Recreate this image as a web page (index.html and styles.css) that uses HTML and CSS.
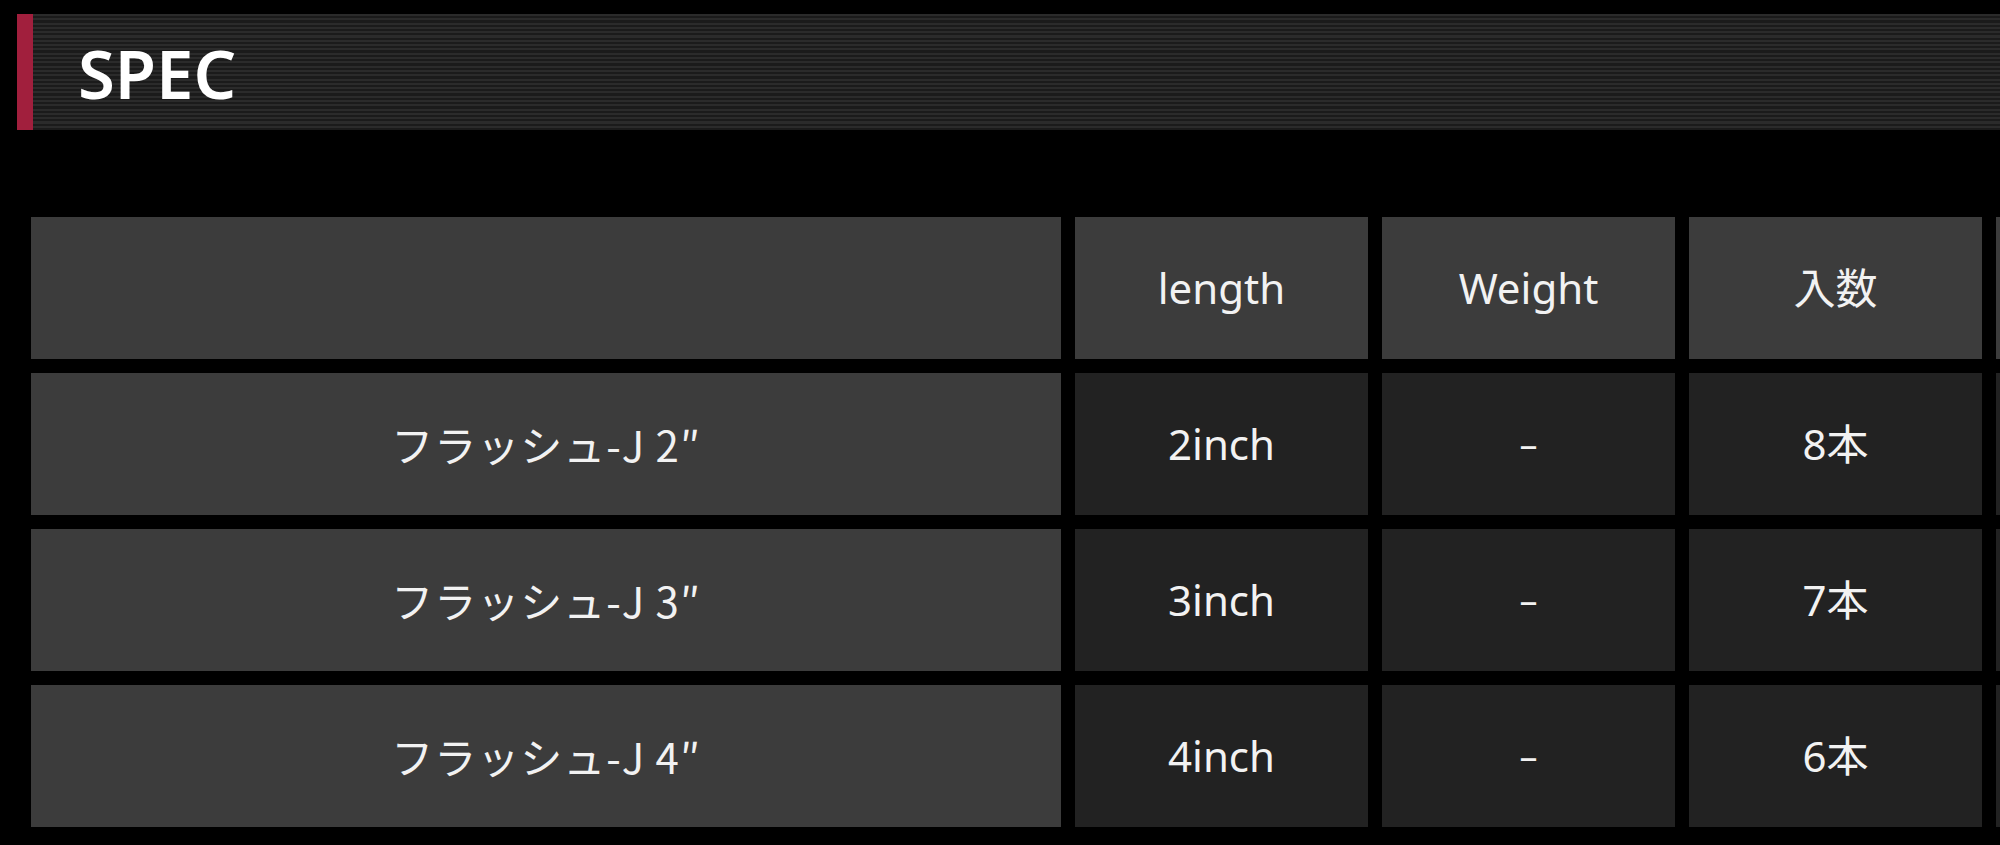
FILE: index.html
```html
<!DOCTYPE html>
<html lang="ja">
<head>
<meta charset="utf-8">
<title>SPEC</title>
<link rel="stylesheet" href="styles.css">
</head>
<body>
<div class="page">
  <h2 class="section-title"><span class="section-title__text">SPEC</span></h2>
  <div class="spec">
    <table class="spec-table">
      <colgroup>
        <col class="col-name">
        <col class="col-val">
        <col class="col-val">
        <col class="col-val">
        <col class="col-val">
      </colgroup>
      <thead>
        <tr>
          <th class="cell cell--head"></th>
          <th class="cell cell--head">length</th>
          <th class="cell cell--head">Weight</th>
          <th class="cell cell--head">入数</th>
          <th class="cell cell--head"></th>
        </tr>
      </thead>
      <tbody>
        <tr>
          <th class="cell cell--name">フラッシュ-J 2″</th>
          <td class="cell cell--val">2inch</td>
          <td class="cell cell--val cell--dash">–</td>
          <td class="cell cell--val">8本</td>
          <td class="cell cell--val"></td>
        </tr>
        <tr>
          <th class="cell cell--name">フラッシュ-J 3″</th>
          <td class="cell cell--val">3inch</td>
          <td class="cell cell--val cell--dash">–</td>
          <td class="cell cell--val">7本</td>
          <td class="cell cell--val"></td>
        </tr>
        <tr>
          <th class="cell cell--name">フラッシュ-J 4″</th>
          <td class="cell cell--val">4inch</td>
          <td class="cell cell--val cell--dash">–</td>
          <td class="cell cell--val">6本</td>
          <td class="cell cell--val"></td>
        </tr>
      </tbody>
    </table>
  </div>
</div>
</body>
</html>
```

FILE: styles.css
```css
html, body {
  margin: 0;
  padding: 0;
  background: #000;
  overflow: hidden;
}

body {
  font-family: "Noto Sans", "Noto Sans CJK JP", sans-serif;
  color: #f2f2f2;
}

.page {
  padding: 14px 0 0 17px;
  width: 2400px;
}

.section-title {
  margin: 0;
  height: 116px;
  display: flex;
  align-items: center;
  box-sizing: border-box;
  border-left: 16px solid #a11f3d;
  padding-left: 45px;
  background: repeating-linear-gradient(
    to bottom,
    #2b2b2b 0px,
    #2b2b2b 2px,
    #1b1b1b 2px,
    #1b1b1b 4.3px
  );
}

.section-title__text {
  font-family: "Noto Sans", sans-serif;
  font-size: 67px;
  font-weight: 600;
  color: #fff;
  line-height: 1;
  margin-top: 2px;
}

.spec {
  margin-top: 73px;
}

.spec-table {
  border-collapse: separate;
  border-spacing: 14.4px;
  margin: -14.4px 0 0 -14.4px;
  position: relative;
  left: 14.4px;
  top: 14.4px;
  table-layout: fixed;
}

.col-name { width: 1030px; }
.col-val { width: 293px; }

.cell {
  height: 142px;
  padding: 0;
  text-align: center;
  vertical-align: middle;
  font-size: 42px;
  font-weight: 400;
  line-height: 1.2;
  color: #f2f2f2;
}

.cell--head {
  background: #3c3c3c;
}

.cell--name {
  background: #3c3c3c;
  font-family: "Noto Sans CJK JP", sans-serif;
  font-size: 42px;
  letter-spacing: 1px;
}

.cell--val {
  background: #222222;
}

.cell--dash {
  font-size: 36px;
}
```
